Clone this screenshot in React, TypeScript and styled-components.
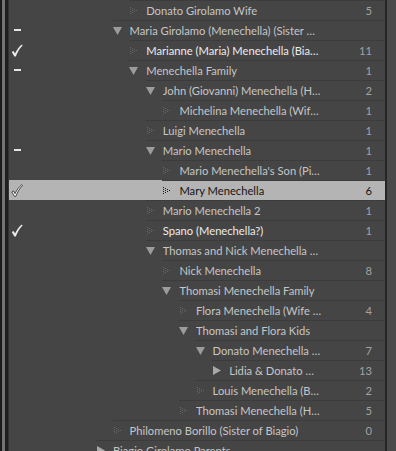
import { createGlobalStyle } from "styled-components";
import styled from "styled-components";

type Mark = "dash" | "check" | "checkOutline";
type Icon = "down" | "right" | "dots";

type Item = {
	name: string;
	level: number;
	icon: Icon;
	count?: number;
	mark?: Mark;
	bright?: boolean;
	selected?: boolean;
};

const items: Item[] = [
	{ name: "Donato Girolamo Wife", level: 2, icon: "dots", count: 5 },
	{ name: "Maria Girolamo (Menechella) (Sister …", level: 1, icon: "down", mark: "dash" },
	{ name: "Marianne (Maria) Menechella (Bia…", level: 2, icon: "dots", count: 11, mark: "check", bright: true },
	{ name: "Menechella Family", level: 2, icon: "down", count: 1, mark: "dash" },
	{ name: "John (Giovanni) Menechella (H…", level: 3, icon: "down", count: 2 },
	{ name: "Michelina Menechella (Wif…", level: 4, icon: "dots", count: 1 },
	{ name: "Luigi Menechella", level: 3, icon: "dots", count: 1 },
	{ name: "Mario Menechella", level: 3, icon: "down", count: 1, mark: "dash" },
	{ name: "Mario Menechella's Son (Pi…", level: 4, icon: "dots", count: 1 },
	{ name: "Mary Menechella", level: 4, icon: "dots", count: 6, mark: "checkOutline", selected: true },
	{ name: "Mario Menechella 2", level: 3, icon: "dots", count: 1 },
	{ name: "Spano (Menechella?)", level: 3, icon: "dots", count: 1, mark: "check", bright: true },
	{ name: "Thomas and Nick Menechella …", level: 3, icon: "down" },
	{ name: "Nick Menechella", level: 4, icon: "dots", count: 8 },
	{ name: "Thomasi Menechella Family", level: 4, icon: "down" },
	{ name: "Flora Menechella (Wife …", level: 5, icon: "dots", count: 4 },
	{ name: "Thomasi and Flora Kids", level: 5, icon: "down" },
	{ name: "Donato Menechella …", level: 6, icon: "down", count: 7 },
	{ name: "Lidia & Donato …", level: 7, icon: "right", count: 13 },
	{ name: "Louis Menechella (B…", level: 6, icon: "dots", count: 2 },
	{ name: "Thomasi Menechella (H…", level: 5, icon: "dots", count: 5 },
	{ name: "Philomeno Borillo (Sister of Biagio)", level: 1, icon: "dots", count: 0 },
	{ name: "Biagio Girolamo Parents", level: 0, icon: "right" },
];

const GlobalStyle = createGlobalStyle`
	html, body {
		margin: 0;
		padding: 0;
		background: #454545;
		overflow: hidden;
	}
`;

const Frame = styled.div`
	display: flex;
	width: 396px;
	height: 451px;
	overflow: hidden;
	background: #454545;
	font-family: Lato, "Noto Sans", sans-serif;
	font-size: 11.2px;
`;

const LeftEdge = styled.div`
	width: 9px;
	flex: none;
	background: linear-gradient(
		to right,
		#1b1b1b 0,
		#1b1b1b 2px,
		#747474 2px,
		#747474 5px,
		#1f1f1f 5px,
		#1f1f1f 8px,
		#333 8px,
		#333 9px
	);
`;

const Panel = styled.div`
	flex: 1;
	display: flex;
	flex-direction: column;
	min-width: 0;
`;

const ScrollTrack = styled.div`
	width: 11px;
	flex: none;
	background: #4a4a4a;
	border-left: 2px solid #262626;
	box-sizing: border-box;
`;

const Row = styled.div<{ $selected?: boolean }>`
	display: flex;
	height: 20px;
	flex: none;
	background: ${(p) => (p.$selected ? "#b4b4b4" : "transparent")};
`;

const MarkCell = styled.div`
	width: 16px;
	flex: none;
	display: flex;
	align-items: center;
	justify-content: center;
`;

const Main = styled.div<{ $level: number }>`
	flex: 1;
	display: flex;
	align-items: center;
	margin-left: ${(p) => 71 + p.$level * 16.6}px;
	border-top: 1px solid #3c3c3c;
	padding-right: 13px;
	min-width: 0;
`;

const IconBox = styled.div`
	width: 17px;
	flex: none;
	display: flex;
	align-items: center;
`;

const Name = styled.span<{ $bright?: boolean; $selected?: boolean }>`
	flex: 1;
	white-space: nowrap;
	overflow: hidden;
	color: ${(p) => (p.$selected ? "#141414" : p.$bright ? "#ececec" : "#c6c6c6")};
`;

const Count = styled.span<{ $selected?: boolean }>`
	flex: none;
	color: ${(p) => (p.$selected ? "#141414" : "#a2a2a2")};
`;

function MarkIcon({ mark }: { mark?: Mark }) {
	if (mark === "dash") {
		return (
			<svg width="7" height="2" viewBox="0 0 7 2">
				<rect width="7" height="2" fill="#e4e4e4" />
			</svg>
		);
	}
	if (mark === "check" || mark === "checkOutline") {
		const outline = mark === "checkOutline";
		return (
			<svg width="12" height="13" viewBox="0 0 12 13">
				<path
					d="M0.8 8 L2.6 6.9 L4 9.6 C5.8 6 8 2.8 10.8 0.6 L11.6 1.4 C8.8 4.2 6.6 7.8 4.8 12.4 L3.4 12.4 Z"
					fill={outline ? "#f4f4f4" : "#ececec"}
					stroke={outline ? "#3a3a3a" : "none"}
					strokeWidth={outline ? 0.9 : 0}
					strokeLinejoin="round"
				/>
			</svg>
		);
	}
	return null;
}

function TreeIcon({ icon, selected }: { icon: Icon; selected?: boolean }) {
	if (icon === "down") {
		return (
			<svg width="9" height="8" viewBox="0 0 9 8">
				<path d="M0 0 H9 L4.5 8 Z" fill="#9c9c9c" />
			</svg>
		);
	}
	if (icon === "right") {
		return (
			<svg width="8" height="9" viewBox="0 0 8 9" style={{ marginLeft: 1 }}>
				<path d="M0 0 L8 4.5 L0 9 Z" fill="#a8a8a8" />
			</svg>
		);
	}
	const dots: [number, number][] = [
		[0, 0], [0, 2], [0, 4], [0, 6],
		[2, 1], [2, 3], [2, 5],
		[4, 2], [4, 4],
		[6, 3],
	];
	return (
		<svg width="7" height="7" viewBox="0 0 7 7" style={{ marginLeft: 1 }}>
			{dots.map(([x, y]) => (
				<rect key={`${x}-${y}`} x={x} y={y} width="1" height="1" fill={selected ? "#1a1a1a" : "#666"} />
			))}
		</svg>
	);
}

export default function App() {
	return (
		<>
			<GlobalStyle />
			<Frame>
				<LeftEdge />
				<Panel>
					{items.map((it) => (
						<Row key={it.name} $selected={it.selected}>
							<MarkCell>
								<MarkIcon mark={it.mark} />
							</MarkCell>
							<Main $level={it.level}>
								<IconBox>
									<TreeIcon icon={it.icon} selected={it.selected} />
								</IconBox>
								<Name $bright={it.bright} $selected={it.selected}>
									{it.name}
								</Name>
								{it.count !== undefined && <Count $selected={it.selected}>{it.count}</Count>}
							</Main>
						</Row>
					))}
				</Panel>
				<ScrollTrack />
			</Frame>
		</>
	);
}
